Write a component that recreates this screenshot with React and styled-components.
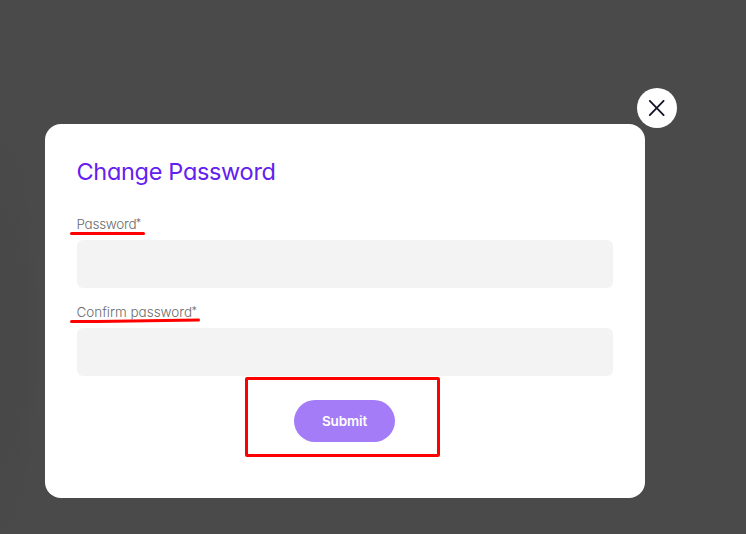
import React from "react";
import styled, { createGlobalStyle } from "styled-components";

const GlobalStyle = createGlobalStyle`
  *, *::before, *::after { box-sizing: border-box; }
  body {
    margin: 0;
    background: #4a4a4a;
    font-family: Inter, "Open Sans", "Liberation Sans", sans-serif;
    font-feature-settings: "cv11" 1;
  }
`;

const Overlay = styled.main`
  width: 746px;
  height: 534px;
  padding: 124px 0 0 45px;
  overflow: hidden;
  background: radial-gradient(ellipse 40px 210px at 0 335px, #484848 60%, #4a4a4a 100%);
`;

const Dialog = styled.section`
  position: relative;
  display: flex;
  flex-direction: column;
  width: 600px;
  height: 374px;
  padding: 32px;
  border-radius: 16px;
  background: #fff;
`;

const CloseButton = styled.button`
  position: absolute;
  top: -36px;
  right: -32px;
  display: grid;
  place-items: center;
  width: 40px;
  height: 40px;
  padding: 0;
  border: 0;
  border-radius: 50%;
  background: #fff;
`;

const Title = styled.h1`
  align-self: flex-start;
  height: 32px;
  margin: 0 0 28px -0.5px;
  color: #6320ee;
  font-size: 23.5px;
  font-weight: 400;
  line-height: 32px;
  letter-spacing: -0.32px;
  white-space: nowrap;
`;

const Form = styled.form`
  display: flex;
  flex-direction: column;
`;

const Field = styled.div`
  display: flex;
  flex-direction: column;
  margin-bottom: ${({ $gap }) => $gap}px;
`;

const Label = styled.label`
  position: relative;
  align-self: flex-start;
  height: 16px;
  margin-bottom: 8px;
  color: #6c6c6c;
  font-size: 13.5px;
  font-weight: 300;
  line-height: 16px;
  letter-spacing: ${({ $tracking }) => $tracking}px;
  text-indent: -0.5px;
  white-space: nowrap;
`;

const Required = styled.span`
  display: inline-block;
  font-size: 11px;
  line-height: 1;
  transform: translateY(-2px);
`;

const Input = styled.input`
  width: 100%;
  height: 48px;
  padding: 0 16px;
  border: 0;
  border-radius: 6px;
  background: #f3f3f3;
  font: inherit;
`;

const Underline = styled.svg`
  position: absolute;
  top: 13px;
  left: -8px;
  overflow: visible;
  pointer-events: none;
`;

const Actions = styled.div`
  position: relative;
  display: flex;
  justify-content: center;
`;

const SubmitButton = styled.button`
  width: 101px;
  height: 42px;
  margin-right: 1px;
  padding: 0;
  border: 0;
  border-radius: 21px;
  background: #a47cf7;
  color: #fff;
  font: 600 13.5px/43px Inter, "Liberation Sans", sans-serif;
  letter-spacing: -0.15px;
`;

const Highlight = styled.div`
  position: absolute;
  top: -23px;
  left: 168px;
  width: 195px;
  height: 80px;
  border: 3px solid #f00;
  border-radius: 2px;
  pointer-events: none;
`;

export default function App() {
  return (
    <>
      <GlobalStyle />
      <Overlay>
        <Dialog role="dialog" aria-labelledby="dialog-title">
          <CloseButton type="button" aria-label="Close">
            <svg width="16" height="16" viewBox="0 0 16 16" fill="none" stroke="#14142b" strokeWidth="1.8" strokeLinecap="round">
              <path d="M0.8 0.8 14.6 15.2M14.6 0.8 0.8 15.2" />
            </svg>
          </CloseButton>
          <Title id="dialog-title">Change Password</Title>
          <Form>
            <Field $gap={16}>
              <Label htmlFor="password" $tracking={-0.28}>
                Password<Required>*</Required>
                <Underline width="77" height="8">
                  <path d="M2.5 4.5H74.5" stroke="#f00" strokeWidth="3" strokeLinecap="round" />
                </Underline>
              </Label>
              <Input id="password" type="password" />
            </Field>
            <Field $gap={24}>
              <Label htmlFor="confirm" $tracking={-0.02}>
                Confirm password<Required>*</Required>
                <Underline width="132" height="8">
                  <path d="M2.5 4.5H28L129.5 3" fill="none" stroke="#f00" strokeWidth="3" strokeLinecap="round" />
                </Underline>
              </Label>
              <Input id="confirm" type="password" />
            </Field>
            <Actions>
              <SubmitButton type="button">Submit</SubmitButton>
              <Highlight />
            </Actions>
          </Form>
        </Dialog>
      </Overlay>
    </>
  );
}
